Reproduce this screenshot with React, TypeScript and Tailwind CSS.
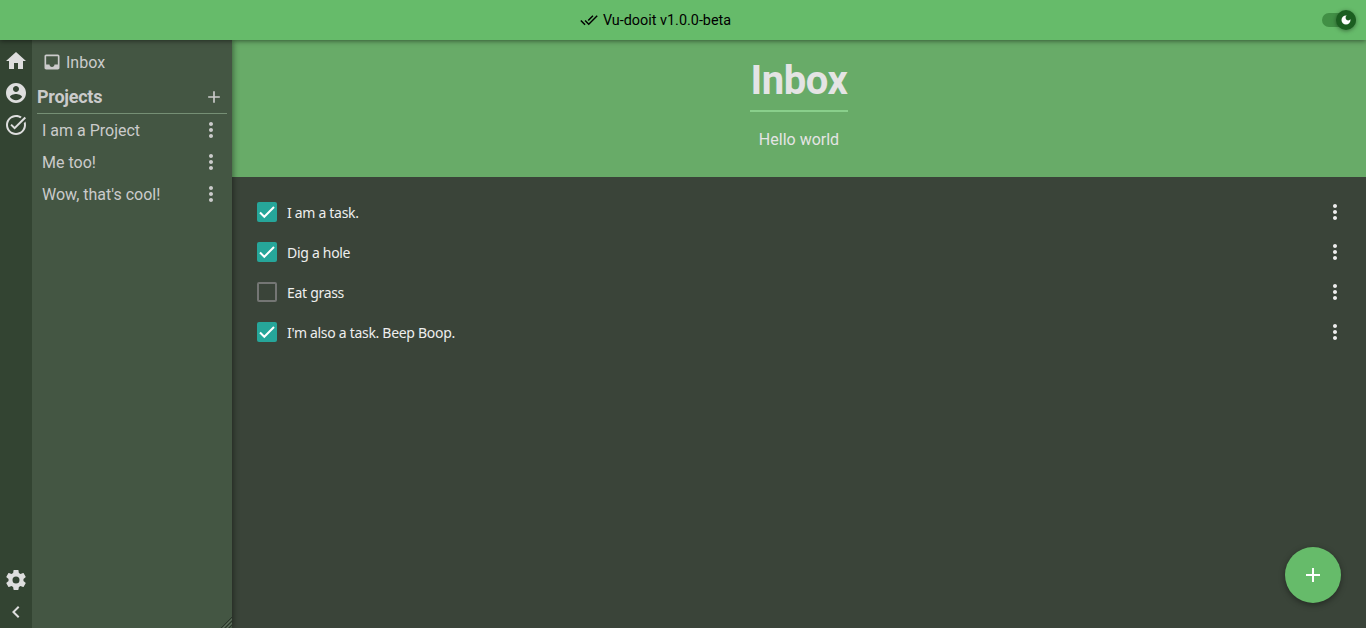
import React, { useState } from "react";

const paths = {
  home: "M10,20V14H14V20H19V12H22L12,3L2,12H5V20H10Z",
  account:
    "M12 2C6.48 2 2 6.48 2 12s4.48 10 10 10 10-4.48 10-10S17.52 2 12 2zm0 3c1.66 0 3 1.34 3 3s-1.34 3-3 3-3-1.34-3-3 1.34-3 3-3zm0 14.2c-2.5 0-4.71-1.28-6-3.22.03-1.99 4-3.08 6-3.08 1.99 0 5.97 1.09 6 3.08-1.29 1.94-3.5 3.22-6 3.22z",
  taskDone:
    "M22,5.18L10.59,16.6l-4.24-4.24l1.41-1.41l2.83,2.83l10-10L22,5.18z M19.79,10.22C19.92,10.79,20,11.39,20,12 c0,4.42-3.58,8-8,8s-8-3.58-8-8c0-4.42,3.58-8,8-8c1.58,0,3.04,0.46,4.28,1.25l1.44-1.44C16.1,2.67,14.13,2,12,2C6.48,2,2,6.48,2,12 c0,5.52,4.48,10,10,10s10-4.48,10-10c0-1.19-0.22-2.33-0.6-3.39L19.79,10.22z",
  cog: "M12,15.5A3.5,3.5 0 0,1 8.5,12A3.5,3.5 0 0,1 12,8.5A3.5,3.5 0 0,1 15.5,12A3.5,3.5 0 0,1 12,15.5M19.43,12.97C19.47,12.65 19.5,12.33 19.5,12C19.5,11.67 19.47,11.34 19.43,11L21.54,9.37C21.73,9.22 21.78,8.95 21.66,8.73L19.66,5.27C19.54,5.05 19.27,4.96 19.05,5.05L16.56,6.05C16.04,5.66 15.5,5.32 14.87,5.07L14.5,2.42C14.46,2.18 14.25,2 14,2H10C9.75,2 9.54,2.18 9.5,2.42L9.13,5.07C8.5,5.32 7.96,5.66 7.44,6.05L4.95,5.05C4.73,4.96 4.46,5.05 4.34,5.27L2.34,8.73C2.21,8.95 2.27,9.22 2.46,9.37L4.57,11C4.53,11.34 4.5,11.67 4.5,12C4.5,12.33 4.53,12.65 4.57,12.97L2.46,14.63C2.27,14.78 2.21,15.05 2.34,15.27L4.34,18.73C4.46,18.95 4.73,19.03 4.95,18.95L7.44,17.94C7.96,18.34 8.5,18.68 9.13,18.93L9.5,21.58C9.54,21.82 9.75,22 10,22H14C14.25,22 14.46,21.82 14.5,21.58L14.87,18.93C15.5,18.67 16.04,18.34 16.56,17.94L19.05,18.95C19.27,19.03 19.54,18.95 19.66,18.73L21.66,15.27C21.78,15.05 21.73,14.78 21.54,14.63L19.43,12.97Z",
  chevronLeft: "M15.41 7.41L14 6l-6 6 6 6 1.41-1.41L10.83 12z",
  inbox:
    "M19 3H4.99c-1.11 0-1.98.89-1.98 2L3 19c0 1.1.88 2 1.99 2H19c1.1 0 2-.9 2-2V5c0-1.11-.9-2-2-2zm0 12h-4c0 1.66-1.35 3-3 3s-3-1.34-3-3H4.99V5H19v10z",
  doneAll:
    "M18 7l-1.41-1.41-6.34 6.34 1.41 1.41L18 7zm4.24-1.41L11.66 16.17 7.48 12l-1.41 1.41L11.66 19l12-12-1.42-1.41zM.41 13.41L6 19l1.41-1.41L1.83 12 .41 13.41z",
  plus: "M19 13h-6v6h-2v-6H5v-2h6V5h2v6h6v2z",
  dots: "M12 8c1.1 0 2-.9 2-2s-.9-2-2-2-2 .9-2 2 .9 2 2 2zm0 2c-1.1 0-2 .9-2 2s.9 2 2 2 2-.9 2-2-.9-2-2-2zm0 6c-1.1 0-2 .9-2 2s.9 2 2 2 2-.9 2-2-.9-2-2-2z",
  moon: "M12 3a9 9 0 1 0 9 9c0-.46-.04-.92-.1-1.36a5.389 5.389 0 0 1-4.4 2.26 5.403 5.403 0 0 1-3.14-9.8c-.44-.06-.9-.1-1.36-.1z",
};

function Icon({ name, className = "size-6" }: { name: keyof typeof paths; className?: string }) {
  return (
    <svg viewBox="0 0 24 24" fill="currentColor" className={`shrink-0 ${className}`} aria-hidden="true">
      <path d={paths[name]} />
    </svg>
  );
}

function RailButton({ name }: { name: keyof typeof paths }) {
  return (
    <button className="flex size-8 items-center justify-center">
      <Icon name={name} />
    </button>
  );
}

const projects = ["I am a Project", "Me too!", "Wow, that's cool!"];

const initialTasks = [
  { text: "I am a task.", done: true },
  { text: "Dig a hole", done: true },
  { text: "Eat grass", done: false },
  { text: "I'm also a task. Beep Boop.", done: true },
];

export default function App() {
  const [tasks, setTasks] = useState(initialTasks);
  const toggle = (index: number) =>
    setTasks(tasks.map((t, i) => (i === index ? { ...t, done: !t.done } : t)));

  return (
    <div className="flex h-screen flex-col overflow-hidden bg-[#3a4439] font-['Roboto',sans-serif] text-base">
      <header className="z-20 grid h-10 shrink-0 grid-cols-[1fr_auto_1fr] items-center bg-[#66bb6a] text-black shadow-[0_1px_5px_rgba(0,0,0,0.5)]">
        <span />
        <div className="flex items-center gap-[5px] pr-[55px] text-[14.4px] leading-5">
          <Icon name="doneAll" className="size-[18px]" />
          <span className="pt-0.5">Vu-dooit v1.0.0-beta</span>
        </div>
        <button className="mr-2.5 flex h-[14px] w-[34px] items-center justify-end justify-self-end rounded-full bg-[#418f45]">
          <span className="flex size-5 shrink-0 items-center justify-center rounded-full bg-[#1b5e20] text-white shadow-[0_1px_4px_rgba(0,0,0,0.4)]">
            <Icon name="moon" className="size-3" />
          </span>
        </button>
      </header>

      <div className="flex min-h-0 flex-1">
        <aside className="z-10 flex shrink-0 shadow-[1px_0_6px_rgba(0,0,0,0.45)]">
          <nav className="flex w-8 flex-col justify-between bg-[#334432] pt-[5px] text-[#dedede]">
            <div>
              <RailButton name="home" />
              <RailButton name="account" />
              <RailButton name="taskDone" />
            </div>
            <div>
              <RailButton name="cog" />
              <RailButton name="chevronLeft" />
            </div>
          </nav>
          <div className="flex w-[200px] flex-col bg-[#445643] px-[5px] pt-[6px] text-[#cbcbcb]">
            <div className="flex h-8 items-center gap-1 pl-[5px]">
              <Icon name="inbox" className="size-5" />
              <span className="pt-0.5">Inbox</span>
            </div>
            <div className="flex h-9 items-center justify-between border-b border-[#768f75] pt-0.5 pr-[3px]">
              <h2 className="text-lg font-bold tracking-[-0.25px]">Projects</h2>
              <Icon name="plus" className="size-5" />
            </div>
            <ul>
              {projects.map((p) => (
                <li key={p} className="flex h-8 items-center justify-between pr-1 pl-[5px]">
                  <span className="pt-0.5">{p}</span>
                  <Icon name="dots" />
                </li>
              ))}
            </ul>
            <svg viewBox="0 0 11 11" className="mt-auto -mr-[5px] size-[11px] self-end" aria-hidden="true">
              <path d="M0 11L11 0M4 11l7-7M8 11l3-3" stroke="#2a352a" strokeWidth="1" />
              <path d="M2 11L11 2M6 11L11 6" stroke="#5f6e5e" strokeWidth="1" />
            </svg>
          </div>
        </aside>

        <main className="flex min-w-0 flex-1 flex-col">
          <section className="flex h-[137px] shrink-0 flex-col items-center bg-[#68ab68] pt-[10px] text-[#e4e4e4]">
            <h1 className="h-[62px] border-b-2 border-[#89cf8b] text-[40px] leading-[62px] font-bold tracking-[-0.4px]">
              Inbox
            </h1>
            <p className="mt-4 leading-6">Hello world</p>
          </section>
          <ul className="flex flex-col px-[25px] pt-[15px] text-[#eeeeee]">
            {tasks.map((t, i) => (
              <li key={t.text} className="flex h-10 items-center justify-between">
                <button onClick={() => toggle(i)} className="flex items-center gap-2.5">
                  {t.done ? (
                    <span className="flex size-5 items-center justify-center rounded-[2px] bg-[#26a69a]">
                      <svg viewBox="0 0 20 20" fill="none" className="size-5" aria-hidden="true">
                        <path d="M3 10.5L7.3 14.8L17 5" stroke="white" strokeWidth="2" />
                      </svg>
                    </span>
                  ) : (
                    <span className="size-5 rounded-[2px] border-2 border-[#747674]" />
                  )}
                  <span className="pt-0.5 font-['Noto_Sans',sans-serif] text-sm leading-5 tracking-[-0.3px]">
                    {t.text}
                  </span>
                </button>
                <span className="-mr-1.5">
                  <Icon name="dots" />
                </span>
              </li>
            ))}
          </ul>
          <button className="mt-auto mr-[25px] mb-[25px] flex size-14 items-center justify-center self-end rounded-full bg-[#66bb6a] text-white shadow-[0_2px_6px_rgba(0,0,0,0.4)]">
            <Icon name="plus" />
          </button>
        </main>
      </div>
    </div>
  );
}
